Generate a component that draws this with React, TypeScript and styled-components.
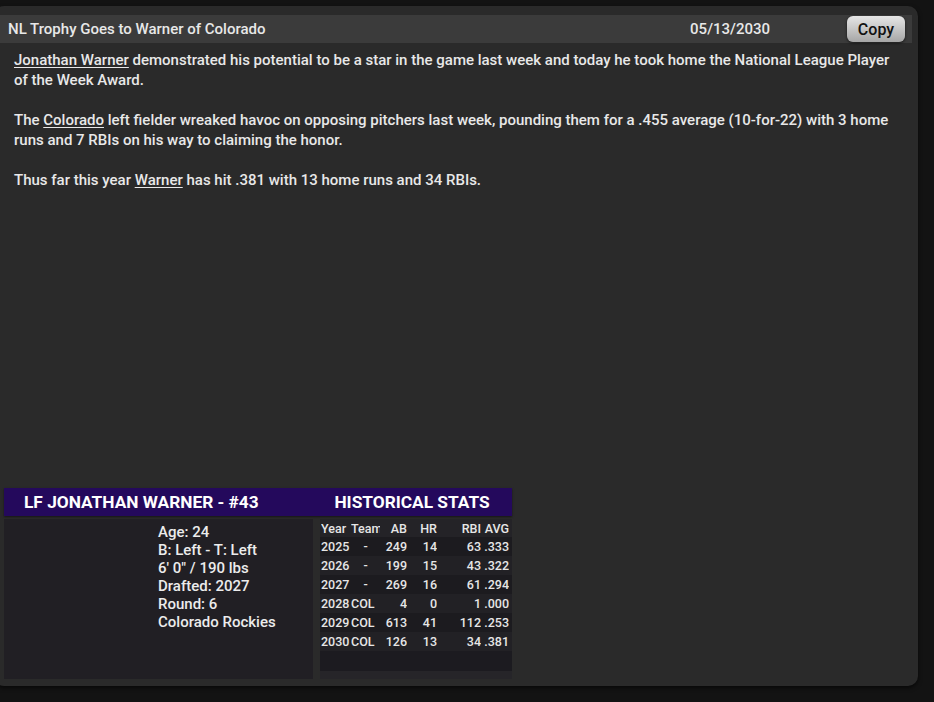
import React from 'react'
import styled, { createGlobalStyle } from 'styled-components'

const GlobalStyle = createGlobalStyle`
  html, body {
    margin: 0;
    padding: 0;
    background-color: #131313;
    font-family: Roboto, "Liberation Sans", sans-serif;
    overflow: hidden;
  }
`;

const Page = styled.div`
  width: 934px;
  height: 702px;
  padding-top: 6px;
  box-sizing: border-box;
`;

const Panel = styled.div`
  margin-left: -6px;
  width: 924px;
  height: 680px;
  box-sizing: border-box;
  padding: 9px 6px 4px 6px;
  background-color: #2a2a2a;
  border-radius: 10px;
  box-shadow: 0 2px 4px rgba(0, 0, 0, 0.6);
  display: flex;
  flex-direction: column;
`;

const Header = styled.div`
  height: 28px;
  background-color: #3b3b3b;
  display: flex;
  align-items: center;
  padding: 0 7px 0 8px;
  color: #e8e8e8;
  font-size: 15px;
  font-weight: 500;
`;

const Title = styled.div`
  flex: 1;
`;

const DateText = styled.div`
  margin-right: 77px;
`;

const CopyButton = styled.button`
  width: 58px;
  height: 26px;
  border: none;
  border-radius: 6px;
  background: linear-gradient(#e6e6e6, #a6a6a6);
  box-shadow: 0 1px 3px rgba(0, 0, 0, 0.6);
  color: #111;
  font-family: Roboto, "Liberation Sans", sans-serif;
  font-size: 16px;
  font-weight: 500;
  padding: 0;
  cursor: pointer;
`;

const Body = styled.div`
  flex: 1;
  padding: 7px 12px 0 14px;
  color: #e8e8e8;
  font-size: 15px;
  font-weight: 500;
  line-height: 20px;

  p {
    margin: 0 0 20px 0;
  }
`;

const Link = styled.span`
  text-decoration: underline;
  text-underline-offset: 2px;
`;

const Card = styled.div`
  margin-left: 4px;
  width: 508px;
  height: 194px;
  display: grid;
  grid-template-columns: 309px 192px;
  grid-template-rows: 28px 1fr;
  column-gap: 7px;
  row-gap: 3px;
`;

const CardBar = styled.div`
  grid-column: 1 / 3;
  display: grid;
  grid-template-columns: 316px 184px;
  align-items: center;
  background-color: #24095c;
  box-shadow: 0 1px 2px rgba(0, 0, 0, 0.5);
  color: #fff;
  font-size: 17.3px;
  font-weight: 700;
`;

const BarTitle = styled.div<{ $center?: boolean }>`
  padding-left: ${(p) => (p.$center ? '0' : '20px')};
  text-align: ${(p) => (p.$center ? 'center' : 'left')};
  white-space: nowrap;
`;

const InfoBox = styled.div`
  background-color: #211f24;
  padding: 4px 0 0 154px;
  color: #ececec;
  font-size: 15px;
  font-weight: 500;
  line-height: 18px;
  height: 160px;
  box-sizing: border-box;
`;

const StatsBox = styled.div`
  background-color: #262529;
  height: 160px;
`;

const StatRow = styled.div<{ $shade: string; $h: number }>`
  display: grid;
  grid-template-columns: 30px 29px 27px 30px 44px 28px;
  padding: 0 3px 0 1px;
  height: ${(p) => p.$h}px;
  align-items: center;
  background-color: ${(p) => p.$shade};
  color: #e6e6e6;
  font-size: 12.5px;
  font-weight: 500;
  white-space: nowrap;
`;

const Cell = styled.div<{ $align?: string }>`
  overflow: hidden;
  text-align: ${(p) => p.$align || 'right'};
`;

const info = ['Age: 24', 'B: Left - T: Left', '6\' 0" / 190 lbs', 'Drafted: 2027', 'Round: 6', 'Colorado Rockies']

const stats = [
  ['2025', '-', '249', '14', '63', '.333'],
  ['2026', '-', '199', '15', '43', '.322'],
  ['2027', '-', '269', '16', '61', '.294'],
  ['2028', 'COL', '4', '0', '1', '.000'],
  ['2029', 'COL', '613', '41', '112', '.253'],
  ['2030', 'COL', '126', '13', '34', '.381'],
]

export default function App() {
  return (
    <Page>
      <GlobalStyle />
      <Panel>
        <Header>
          <Title>NL Trophy Goes to Warner of Colorado</Title>
          <DateText>05/13/2030</DateText>
          <CopyButton>Copy</CopyButton>
        </Header>

        <Body>
          <p>
            <Link>Jonathan Warner</Link> demonstrated his potential to be a star in the game last week and today he took home the National League Player of the Week Award.
          </p>
          <p>
            The <Link>Colorado</Link> left fielder wreaked havoc on opposing pitchers last week, pounding them for a .455 average (10-for-22) with 3 home runs and 7 RBIs on his way to claiming the honor.
          </p>
          <p>
            Thus far this year <Link>Warner</Link> has hit .381 with 13 home runs and 34 RBIs.
          </p>
        </Body>

        <Card>
          <CardBar>
            <BarTitle>LF JONATHAN WARNER - #43</BarTitle>
            <BarTitle $center>HISTORICAL STATS</BarTitle>
          </CardBar>

          <InfoBox>
            {info.map((line) => (
              <div key={line}>{line}</div>
            ))}
          </InfoBox>

          <StatsBox>
            <StatRow $shade="#242327" $h={18}>
              <Cell $align="left">Year</Cell>
              <Cell $align="left">Team</Cell>
              <Cell>AB</Cell>
              <Cell>HR</Cell>
              <Cell>RBI</Cell>
              <Cell>AVG</Cell>
            </StatRow>
            {stats.map((row, i) => (
              <StatRow key={row[0]} $shade={i % 2 === 0 ? '#1c1b1f' : '#222125'} $h={19}>
                <Cell $align="left">{row[0]}</Cell>
                <Cell $align={row[1] === '-' ? 'center' : 'left'}>{row[1]}</Cell>
                <Cell>{row[2]}</Cell>
                <Cell>{row[3]}</Cell>
                <Cell>{row[4]}</Cell>
                <Cell>{row[5]}</Cell>
              </StatRow>
            ))}
            <StatRow $shade="#1c1b20" $h={20} />
          </StatsBox>
        </Card>
      </Panel>
    </Page>
  )
}
